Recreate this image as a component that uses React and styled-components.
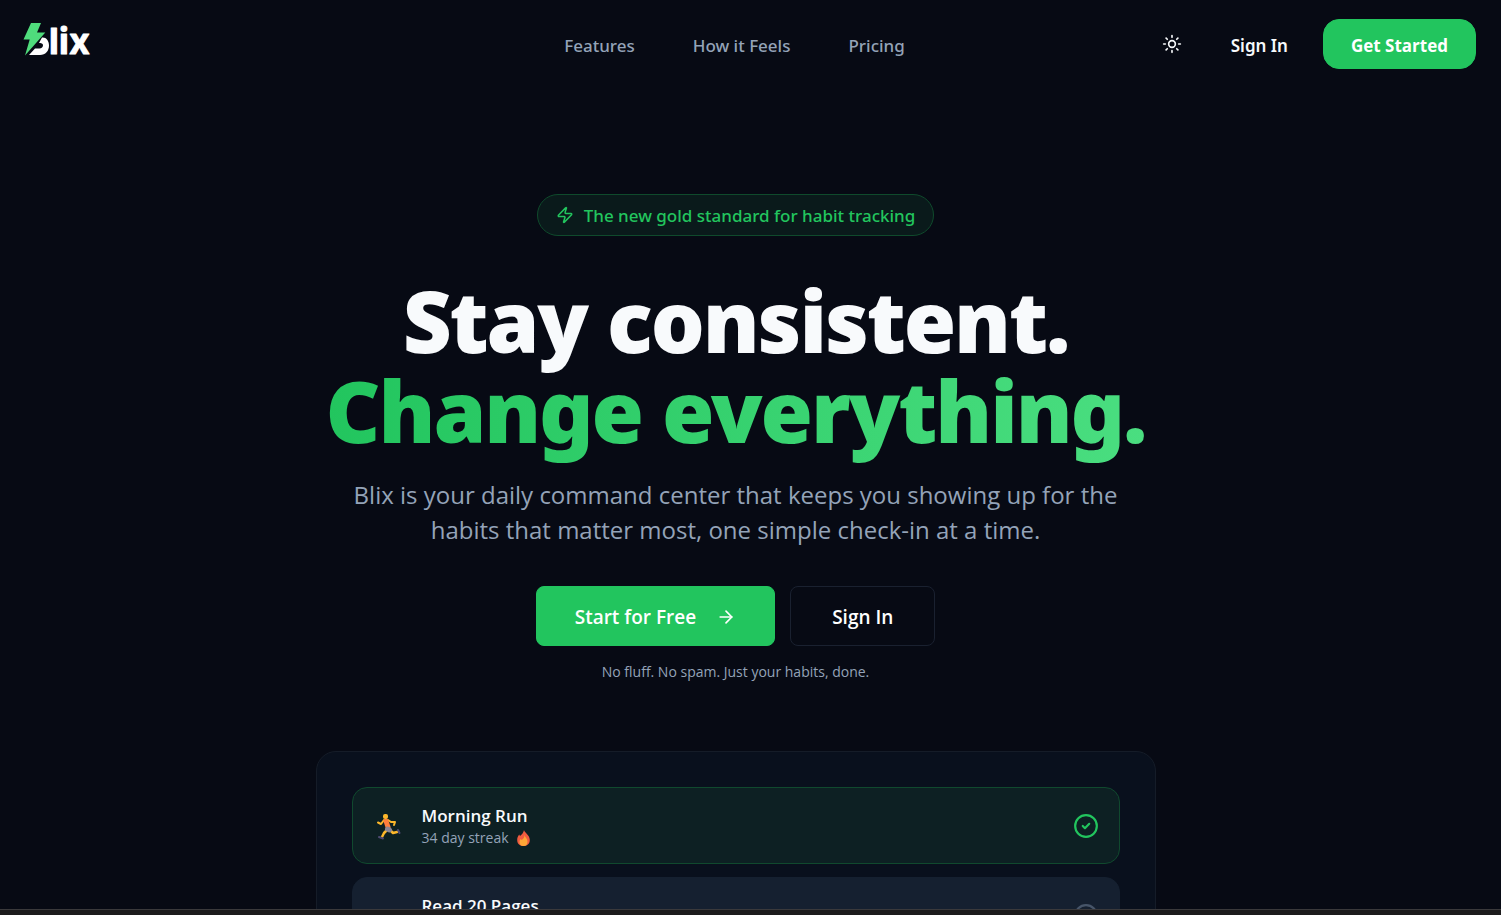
import React from "react"
import styled, { createGlobalStyle, css } from "styled-components"
import { ArrowRight, CircleCheck, Circle, Sun, Zap } from "lucide-react"

const GlobalStyles = createGlobalStyle`
  * {
    box-sizing: border-box;
  }
  body {
    margin: 0;
    background: #070a14;
    color: #f8fafc;
    font-family: "Open Sans", "Noto Sans", sans-serif;
  }
  h1, p, ul {
    margin: 0;
    padding: 0;
  }
  button {
    font-family: inherit;
    cursor: pointer;
  }
`

const PageStyles = styled.div`
  display: flex;
  flex-direction: column;
  height: 100vh;
`

const ScrollStyles = styled.div`
  flex: 1;
  min-height: 0;
  overflow-y: auto;
  scrollbar-width: none;
`

const BottomEdge = styled.div`
  height: 6px;
  background: #1c1b1c;
  border-top: 1px solid #3a393b;
`

const HeaderStyles = styled.header`
  display: grid;
  grid-template-columns: 1fr auto 1fr;
  align-items: center;
  height: 88px;
  padding: 0 25px 0 23px;
`

const LogoLink = styled.a`
  display: block;
  width: 76px;
  height: 40px;
  margin-bottom: 4px;
  svg {
    display: block;
  }
`

const NavStyles = styled.nav`
  display: flex;
  gap: 58px;
  margin-right: 30px;
`

const NavLink = styled.a`
  padding-top: 3px;
  color: #94a3b8;
  font-family: "Noto Sans", "Open Sans", sans-serif;
  font-size: 17px;
  font-weight: 500;
  line-height: 24px;
  text-decoration: none;
`

const HeaderActions = styled.div`
  display: flex;
  align-items: center;
  justify-content: flex-end;
`

const IconButton = styled.button`
  display: flex;
  padding: 10px;
  margin-right: 39px;
  border: 0;
  background: none;
  color: #f8fafc;
`

const HeaderLink = styled(NavLink)`
  margin-right: 35px;
  color: #f8fafc;
  font-weight: 600;
`

const Button = styled.button`
  display: inline-flex;
  align-items: center;
  justify-content: center;
  gap: 20px;
  height: 60px;
  padding: 2px 38px 0;
  border: 1px solid #22c55e;
  border-radius: 8px;
  background: #22c55e;
  color: #ffffff;
  font-size: 19px;
  font-weight: 600;
  white-space: nowrap;
  ${({ $outline }) =>
    $outline &&
    css`
      padding: 2px 41px 0;
      border-color: #1a2130;
      background: transparent;
    `}
  ${({ $compact }) =>
    $compact &&
    css`
      height: 50px;
      padding: 2px 27px 0;
      border-radius: 16px;
      font-size: 17px;
      font-weight: 700;
    `}
`

const HeroStyles = styled.main`
  display: flex;
  flex-direction: column;
  align-items: center;
  padding: 106px 30px 0 0;
  text-align: center;
`

const Badge = styled.div`
  display: flex;
  align-items: center;
  gap: 10px;
  height: 42px;
  padding: 0 18px;
  border: 1px solid #0f4a2c;
  border-radius: 21px;
  background: #0a1a1b;
  color: #22c55e;
  font-family: "Noto Sans", "Open Sans", sans-serif;
  font-size: 17px;
  font-weight: 500;
`

const Title = styled.h1`
  margin-top: 39px;
  font-family: "Noto Sans", "Open Sans", sans-serif;
  font-size: 85px;
  font-weight: 900;
  line-height: 90px;
  letter-spacing: -0.025em;
`

const TitleAccent = styled.span`
  display: block;
  padding-bottom: 10px;
  background: linear-gradient(to right, #22c55e, #4ade80);
  background-clip: text;
  color: transparent;
`

const Lead = styled.p`
  max-width: 800px;
  margin-top: 12px;
  color: #94a3b8;
  font-size: 24px;
  line-height: 35px;
`

const ButtonRow = styled.div`
  display: flex;
  gap: 15px;
  margin-top: 39px;
`

const FinePrint = styled.p`
  margin-top: 15px;
  color: #94a3b8;
  font-size: 14px;
  line-height: 22px;
`

const HabitPanel = styled.ul`
  display: flex;
  flex-direction: column;
  gap: 13px;
  width: 100%;
  max-width: 840px;
  margin-top: 68px;
  padding: 35px;
  border: 1px solid #151c28;
  border-radius: 20px;
  background: #09101d;
  list-style: none;
  text-align: left;
`

const HabitRow = styled.li`
  display: flex;
  align-items: center;
  height: 77px;
  padding: 0 20px;
  border: 1px solid ${({ $done }) => ($done ? "#10492e" : "#152030")};
  border-radius: 15px;
  background: ${({ $done }) => ($done ? "#0d2023" : "#152030")};
  color: ${({ $done }) => ($done ? "#22c55e" : "#475569")};
`

const HabitEmoji = styled.span`
  width: 49px;
  padding: 10px 0 0 4px;
  font-size: 18px;
  line-height: 30px;
`

const HabitText = styled.div`
  flex: 1;
  padding-top: 3px;
`

const HabitName = styled.p`
  color: #f8fafc;
  font-size: 17px;
  font-weight: 600;
  line-height: 22px;
`

const HabitStreak = styled.p`
  display: flex;
  align-items: center;
  gap: 8px;
  color: #94a3b8;
  font-size: 14px;
  line-height: 22px;
`

const Runner = () => (
  <svg width="24" height="26" viewBox="0 0 24 26" aria-hidden="true">
    <g fill="none" strokeLinecap="round" strokeLinejoin="round">
      <path d="M7 6 4 10 1 8.500" stroke="#fcb72a" strokeWidth="2" />
      <path d="m11 6 3 2 4 0-1 3" stroke="#fcb72a" strokeWidth="2" />
      <path d="m10 16-3 3-2 4" stroke="#fcb72a" strokeWidth="2.500" />
      <path d="m13 16 3 3 4-1" stroke="#fcb72a" strokeWidth="2.500" />
      <path d="m2 23 4 1.500M21 16l1.500 3" stroke="#4f4a72" strokeWidth="2" />
      <path d="m9 7 2 6" stroke="#ff7d3c" strokeWidth="5" />
      <path d="m10.500 15 2 1" stroke="#8a8594" strokeWidth="5" />
    </g>
    <rect x="6" y="0" width="5" height="5" rx="2" fill="#fcb72a" />
  </svg>
)

const Flame = () => (
  <svg width="13" height="16" viewBox="0 0 13 16" aria-hidden="true">
    <path
      d="M7 0c0 2 5.800 5 5.800 10 0 4-3 6-6.300 6S.2 14 .2 10C.2 7.500 1 6 2.200 4.500L3 6C5 4.500 6.500 2.500 7 0Z"
      fill="#ef5b40"
    />
    <path
      d="M7.500 5c.3 2 3 3.500 3 6.500S9 16 6.500 16 2.500 14.500 2.500 12c0-1.500.7-2.300 1.200-3l1 1C6.500 9 7.500 7 7.500 5Z"
      fill="#fda636"
    />
  </svg>
)

const Logo = () => (
  <svg width="76" height="40" viewBox="0 0 76 40" aria-hidden="true">
    <path d="M8 1h10l-4 9.500h8.300L2 33.500l4.700-16H.5Z" fill="#4fdc7c" />
    <path
      d="M19 15.500c4-.5 7 3 7 8 0 5.500-3.500 9.500-9 9.500H6l6-6.500h4.500c2.200 0 3.500-1.400 3.500-3.200 0-1.600-1.500-2.600-4-2.200Z"
      fill="#ffffff"
    />
    <text
      x="26 36 46"
      y="32"
      fill="#ffffff"
      stroke="#ffffff"
      strokeWidth="1"
      strokeLinejoin="round"
      fontFamily="Inter, sans-serif"
      fontSize="36"
      fontWeight="700"
    >
      lix
    </text>
  </svg>
)

const habits = [
  { name: "Morning Run", streak: "34 day streak", emoji: <Runner />, done: true },
  { name: "Read 20 Pages", streak: "12 day streak", emoji: "📚", done: false },
]

const Habit = ({ name, streak, emoji, done }) => (
  <HabitRow $done={done}>
    <HabitEmoji>{emoji}</HabitEmoji>
    <HabitText>
      <HabitName>{name}</HabitName>
      <HabitStreak>
        {streak}
        <Flame />
      </HabitStreak>
    </HabitText>
    {done ? <CircleCheck size={26} /> : <Circle size={26} />}
  </HabitRow>
)

const App = () => (
  <PageStyles>
    <GlobalStyles />
    <ScrollStyles>
      <HeaderStyles>
        <LogoLink href="#" aria-label="Blix">
          <Logo />
        </LogoLink>
        <NavStyles>
          <NavLink href="#features">Features</NavLink>
          <NavLink href="#feels">How it Feels</NavLink>
          <NavLink href="#pricing">Pricing</NavLink>
        </NavStyles>
        <HeaderActions>
          <IconButton aria-label="Toggle theme">
            <Sun size={20} />
          </IconButton>
          <HeaderLink href="#signin">Sign In</HeaderLink>
          <Button $compact>Get Started</Button>
        </HeaderActions>
      </HeaderStyles>
      <HeroStyles>
        <Badge>
          <Zap size={18} />
          The new gold standard for habit tracking
        </Badge>
        <Title>
          Stay consistent.
          <TitleAccent>Change everything.</TitleAccent>
        </Title>
        <Lead>
          Blix is your daily command center that keeps you showing up for the
          habits that matter most, one simple check-in at a time.
        </Lead>
        <ButtonRow>
          <Button>
            Start for Free
            <ArrowRight size={20} />
          </Button>
          <Button $outline>Sign In</Button>
        </ButtonRow>
        <FinePrint>No fluff. No spam. Just your habits, done.</FinePrint>
        <HabitPanel>
          {habits.map(habit => (
            <Habit key={habit.name} {...habit} />
          ))}
        </HabitPanel>
      </HeroStyles>
    </ScrollStyles>
    <BottomEdge />
  </PageStyles>
)

export default App
